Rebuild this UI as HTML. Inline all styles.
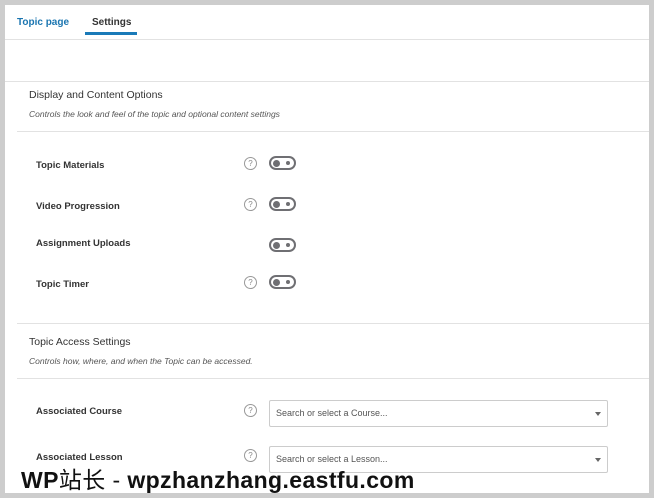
<!DOCTYPE html><html><head><style>
body{margin:0;width:654px;height:498px;background:#cdcdcd;position:relative;overflow:hidden;font-family:"Liberation Sans",sans-serif;}
.p{position:absolute;left:5px;top:5px;width:644px;height:488px;background:#fff;}
.a{position:absolute;white-space:nowrap;}
.hl{position:absolute;height:1px;background:#e2e2e2;}
.lb{font-size:9.5px;font-weight:bold;color:#333;}
.q{position:absolute;width:11px;height:11px;border:1px solid #999;border-radius:50%;font-size:8px;color:#888;text-align:center;line-height:11px;}
.t{position:absolute;width:23px;height:10px;border:2px solid #6f6f73;border-radius:7px;}
.t:before{content:"";position:absolute;left:2px;top:1.5px;width:7px;height:7px;border-radius:50%;background:#6f6f73;}
.t:after{content:"";position:absolute;right:4px;top:3px;width:4px;height:4px;border-radius:50%;background:#6f6f73;}
.s{position:absolute;left:269px;width:337px;height:25px;border:1px solid #ccc;border-radius:2px;font-size:9px;color:#555;line-height:25px;text-indent:6px;}
.s:after{content:"";position:absolute;right:6px;top:11px;border:3px solid transparent;border-top:4px solid #666;}
</style></head><body>
<div class="p"></div>
<div class="a" style="left:17px;top:17px;font-size:10px;font-weight:bold;color:#1a75b0">Topic page</div>
<div class="a" style="left:92px;top:17px;font-size:10px;font-weight:bold;color:#333">Settings</div>
<div class="a" style="left:85px;top:32px;width:52px;height:3px;background:#1a7ab8"></div>
<div class="hl" style="left:5px;top:39px;width:644px"></div>
<div class="hl" style="left:5px;top:81px;width:644px"></div>
<div class="a" style="left:29px;top:89px;font-size:10.5px;color:#333">Display and Content Options</div>
<div class="a" style="left:29px;top:109px;font-size:8.5px;font-style:italic;color:#555">Controls the look and feel of the topic and optional content settings</div>
<div class="hl" style="left:17px;top:131px;width:632px"></div>
<div class="a lb" style="left:36px;top:160px">Topic Materials</div>
<div class="q" style="left:244px;top:157px">?</div><div class="t" style="left:269px;top:156px"></div>
<div class="a lb" style="left:36px;top:201px">Video Progression</div>
<div class="q" style="left:244px;top:198px">?</div><div class="t" style="left:269px;top:197px"></div>
<div class="a lb" style="left:36px;top:238px">Assignment Uploads</div>
<div class="t" style="left:269px;top:238px"></div>
<div class="a lb" style="left:36px;top:279px">Topic Timer</div>
<div class="q" style="left:244px;top:276px">?</div><div class="t" style="left:269px;top:275px"></div>
<div class="hl" style="left:17px;top:323px;width:632px"></div>
<div class="a" style="left:29px;top:336px;font-size:10.5px;color:#333">Topic Access Settings</div>
<div class="a" style="left:29px;top:356px;font-size:8.5px;font-style:italic;color:#555">Controls how, where, and when the Topic can be accessed.</div>
<div class="hl" style="left:17px;top:378px;width:632px"></div>
<div class="a lb" style="left:36px;top:406px">Associated Course</div>
<div class="q" style="left:244px;top:404px">?</div>
<div class="s" style="top:400px">Search or select a Course...</div>
<div class="a lb" style="left:36px;top:452px">Associated Lesson</div>
<div class="q" style="left:244px;top:449px">?</div>
<div class="s" style="top:446px">Search or select a Lesson...</div>
<div class="a" style="left:21px;top:461px;font-size:23px;font-weight:bold;color:#111;letter-spacing:0.4px;font-family:'Liberation Sans','Noto Sans CJK SC',sans-serif">WP<span style="font-weight:normal">站长</span> <span style="font-weight:normal">-</span> wpzhanzhang.eastfu.com</div>
</body></html>
